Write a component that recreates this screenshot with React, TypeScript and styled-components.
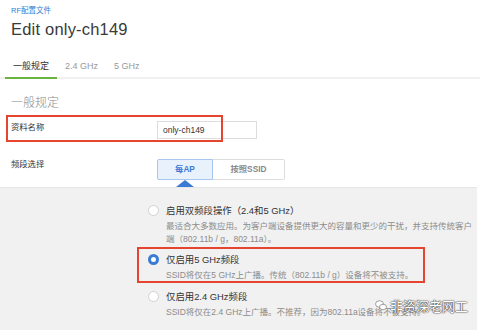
import React from 'react';
import styled, { createGlobalStyle } from 'styled-components';

const GlobalStyle = createGlobalStyle`
  html, body {
    margin: 0;
    padding: 0;
    background: #fff;
  }
  body {
    font-family: "Liberation Sans", "Noto Sans CJK SC", sans-serif;
    color: #333;
  }
`;

const Page = styled.div`
  position: relative;
  width: 480px;
  height: 330px;
  overflow: hidden;
  background: #fff;
`;

const Header = styled.div`
  padding: 6px 11px 0;
`;

const Crumb = styled.div`
  font-size: 7.5px;
  line-height: 10px;
  color: #2f7fd6;
`;

const Title = styled.h1`
  margin: 3px 0 0;
  font-size: 16.5px;
  line-height: 20px;
  font-weight: 300;
  color: #3a3a3a;
  letter-spacing: 0.2px;
`;

const Tabs = styled.div`
  display: flex;
  margin-top: 18px;
  padding-left: 5px;
  border-bottom: 2px solid #f0f0f0;
`;

const Tab = styled.div<{ $active?: boolean }>`
  padding: 0 8px;
  height: 22px;
  line-height: 18px;
  font-size: 9px;
  color: ${(p) => (p.$active ? '#333' : '#999')};
  border-bottom: 2px solid ${(p) => (p.$active ? '#6db33f' : 'transparent')};
  margin-bottom: -2px;
  box-sizing: border-box;
`;

const Section = styled.div`
  padding: 16px 11px 0;
`;

const SectionTitle = styled.div`
  font-size: 12px;
  line-height: 16px;
  color: #8a8a8a;
  font-weight: 300;
`;

const Row = styled.div<{ $gap: number }>`
  position: relative;
  display: flex;
  align-items: flex-start;
  margin-top: ${(p) => p.$gap}px;
`;

const Label = styled.div<{ $shift: number }>`
  width: 146px;
  margin-top: ${(p) => p.$shift}px;
  font-size: 8.3px;
  line-height: 12px;
  color: #333;
`;

const Input = styled.div`
  width: 100px;
  height: 18px;
  box-sizing: border-box;
  border: 1px solid #ddd;
  padding: 0 5px;
  font-size: 8.5px;
  line-height: 16px;
  color: #333;
  background: #fff;
`;

const Mark = styled.div<{ $w: number; $h: number; $l: number; $t: number }>`
  position: absolute;
  left: ${(p) => p.$l}px;
  top: ${(p) => p.$t}px;
  width: ${(p) => p.$w}px;
  height: ${(p) => p.$h}px;
  box-sizing: border-box;
  border: 2px solid #e5452f;
  pointer-events: none;
`;

const Segments = styled.div`
  display: flex;
`;

const Segment = styled.div<{ $active?: boolean }>`
  position: relative;
  height: 21px;
  box-sizing: border-box;
  width: ${(p) => (p.$active ? '56px' : '72px')};
  text-align: center;
  font-size: 8.3px;
  font-weight: bold;
  line-height: 19px;
  color: ${(p) => (p.$active ? '#3a7bd5' : '#888')};
  background: ${(p) => (p.$active ? '#e9f1fc' : '#fff')};
  border: 1px solid ${(p) => (p.$active ? '#a8c7ef' : '#ddd')};
  border-left-width: ${(p) => (p.$active ? '1px' : '0')};
  border-radius: ${(p) => (p.$active ? '2px 0 0 2px' : '0 2px 2px 0')};

  ${(p) =>
    p.$active &&
    `
    &::after {
      content: '';
      position: absolute;
      left: 50%;
      bottom: -8px;
      margin-left: -9px;
      border-left: 9px solid transparent;
      border-right: 9px solid transparent;
      border-bottom: 7px solid #3a7bd5;
    }
  `}
`;

const Panel = styled.div`
  margin-top: 7px;
  margin-right: 3px;
  height: 170px;
  background: #f1f1f1;
  border-top: 1px solid #e6e6e6;
  padding: 16px 0 0 148px;
  box-sizing: border-box;
`;

const Option = styled.div`
  position: relative;
  display: grid;
  grid-template-columns: 18px 1fr;
  margin-bottom: 8px;
  padding-right: 2px;
`;

const Radio = styled.span<{ $checked?: boolean }>`
  margin-top: 1px;
  width: 11px;
  height: 11px;
  box-sizing: border-box;
  border-radius: 50%;
  background: #fff;
  border: ${(p) => (p.$checked ? '3px solid #3a7bd5' : '1px solid #d0d0d0')};
`;

const OptionTitle = styled.div`
  font-size: 9.4px;
  line-height: 13px;
  color: #333;
`;

const OptionText = styled.div`
  grid-column: 2;
  margin-top: 3px;
  font-size: 8.5px;
  line-height: 12.5px;
  color: #8c8c8c;
`;

const Watermark = styled.div`
  position: absolute;
  right: 12px;
  bottom: 15px;
  display: flex;
  align-items: center;
  gap: 3px;
  font-size: 13px;
  color: #fff;
  text-shadow: 0 0 1px #333, 0 0 1px #333, 0 0 2px #555;
`;

const options = [
  {
    title: '启用双频段操作（2.4和5 GHz）',
    text: '最适合大多数应用。为客户端设备提供更大的容量和更少的干扰，并支持传统客户端（802.11b / g，802.11a）。',
  },
  {
    title: '仅启用5 GHz频段',
    text: 'SSID将仅在5 GHz上广播。传统（802.11b / g）设备将不被支持。',
    checked: true,
    marked: true,
  },
  {
    title: '仅启用2.4 GHz频段',
    text: 'SSID将仅在2.4 GHz上广播。不推荐，因为802.11a设备将不被支持。',
  },
];

const App = () => {
  return (
    <Page>
      <GlobalStyle />
      <Header>
        <Crumb>RF配置文件</Crumb>
        <Title>Edit only-ch149</Title>
      </Header>
      <Tabs>
        <Tab $active>一般规定</Tab>
        <Tab>2.4 GHz</Tab>
        <Tab>5 GHz</Tab>
      </Tabs>
      <Section>
        <SectionTitle>一般规定</SectionTitle>
        <Row $gap={10}>
          <Label $shift={0}>资料名称</Label>
          <Input>only-ch149</Input>
          <Mark $l={-5} $t={-6} $w={217} $h={27} />
        </Row>
        <Row $gap={20}>
          <Label $shift={-1}>频段选择</Label>
          <Segments>
            <Segment $active>每AP</Segment>
            <Segment>按照SSID</Segment>
          </Segments>
        </Row>
      </Section>
      <Panel>
        {options.map((o, i) => (
          <Option key={i}>
            <Radio $checked={o.checked} />
            <OptionTitle>{o.title}</OptionTitle>
            <OptionText>{o.text}</OptionText>
            {o.marked && <Mark $l={-11} $t={-6} $w={288} $h={36} />}
          </Option>
        ))}
      </Panel>
      <Watermark>
        <svg width="12" height="11" viewBox="0 0 24 22">
          <ellipse cx="9" cy="8" rx="8" ry="6.5" fill="#fff" stroke="#666" strokeWidth="1.2" />
          <ellipse cx="16" cy="14" rx="7" ry="5.5" fill="#fff" stroke="#666" strokeWidth="1.2" />
        </svg>
        <span>非资深老网工</span>
      </Watermark>
    </Page>
  );
};

export default App;
